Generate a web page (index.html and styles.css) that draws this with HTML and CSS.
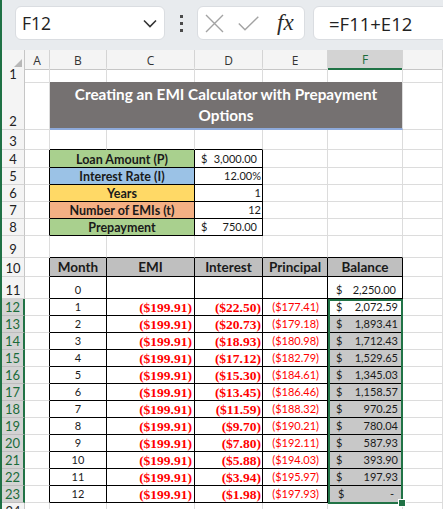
FILE: index.html
```html
<!DOCTYPE html>
<html>
<head>
<meta charset="utf-8">
<link rel="stylesheet" href="styles.css">
</head>
<body>
<div class="app">
  <div class="fbar">
    <div class="namebox"><span>F12</span><svg class="chev" width="14" height="9" viewBox="0 0 14 9"><polyline points="1,1.5 7,7.5 13,1.5" fill="none" stroke="#333" stroke-width="1.6"/></svg></div>
    <div class="dots"><i></i><i></i><i></i></div>
    <div class="fxbox">
      <svg class="xic" width="19" height="19" viewBox="0 0 19 19"><path d="M1 1L18 18M18 1L1 18" stroke="#a3a3a3" stroke-width="1.4" fill="none"/></svg>
      <svg class="ckic" width="21" height="15" viewBox="0 0 21 15"><polyline points="0.8,7.5 7,13.8 20.3,0.8" stroke="#a3a3a3" stroke-width="1.4" fill="none"/></svg>
      <span class="fx">fx</span>
    </div>
    <div class="formula">=F11+E12</div>
  </div>

  <div class="row h17">
    <div class="corner"><svg width="9" height="9" viewBox="0 0 9 9"><polygon points="9,0 9,9 0,9" fill="#b7b7b7"/></svg></div>
    <div class="ch">A</div><div class="ch">B</div><div class="ch">C</div><div class="ch">D</div><div class="ch">E</div><div class="ch sel">F</div><div class="ch"></div>
  </div>

  <div class="row h15"><div class="rh">1</div><div class="c"></div><div class="c"></div><div class="c"></div><div class="c"></div><div class="c"></div><div class="c"></div><div class="c"></div></div>

  <div class="row h48"><div class="rh">2</div><div class="c"></div><div class="c title">Creating an EMI Calculator with Prepayment<br>Options</div><div class="c"></div></div>

  <div class="row h20"><div class="rh">3</div><div class="c"></div><div class="c bb"></div><div class="c bb"></div><div class="c bb"></div><div class="c"></div><div class="c"></div><div class="c"></div></div>

  <div class="row h18"><div class="rh">4</div><div class="c br"></div><div class="c t lbl lg">Loan Amount (P)</div><div class="c t accd"><span>$</span><span>3,000.00</span></div><div class="c"></div><div class="c"></div><div class="c"></div></div>
  <div class="row h17"><div class="rh">5</div><div class="c br"></div><div class="c t lbl lb">Interest Rate (I)</div><div class="c t rtd">12.00%</div><div class="c"></div><div class="c"></div><div class="c"></div></div>
  <div class="row h17"><div class="rh">6</div><div class="c br"></div><div class="c t lbl ly">Years</div><div class="c t rtd">1</div><div class="c"></div><div class="c"></div><div class="c"></div></div>
  <div class="row h17"><div class="rh">7</div><div class="c br"></div><div class="c t lbl lo">Number of EMIs (t)</div><div class="c t rtd">12</div><div class="c"></div><div class="c"></div><div class="c"></div></div>
  <div class="row h17"><div class="rh">8</div><div class="c br"></div><div class="c t lbl lg">Prepayment</div><div class="c t accd"><span>$</span><span>750.00</span></div><div class="c"></div><div class="c"></div><div class="c"></div></div>

  <div class="row h22"><div class="rh">9</div><div class="c"></div><div class="c bb"></div><div class="c bb"></div><div class="c bb"></div><div class="c bb"></div><div class="c bb"></div><div class="c"></div></div>

  <div class="row h19"><div class="rh">10</div><div class="c br"></div><div class="c t hd">Month</div><div class="c t hd">EMI</div><div class="c t hd">Interest</div><div class="c t hd">Principal</div><div class="c t hd">Balance</div><div class="c"></div></div>

  <div class="row h22"><div class="rh">11</div><div class="c br"></div><div class="c t mo">0</div><div class="c t"></div><div class="c t"></div><div class="c t"></div><div class="c t bal b0"><span>$</span><span>2,250.00</span></div><div class="c"></div></div>

  <div class="row h17"><div class="rh sel">12</div><div class="c br"></div><div class="c t mo">1</div><div class="c t emi">($199.91)</div><div class="c t int">($22.50)</div><div class="c t pr">($177.41)</div><div class="c t bal act"><span>$</span><span>2,072.59</span><i class="selbox"><b class="handle"></b></i></div><div class="c"></div></div>
  <div class="row h17"><div class="rh sel">13</div><div class="c br"></div><div class="c t mo">2</div><div class="c t emi">($199.91)</div><div class="c t int">($20.73)</div><div class="c t pr">($179.18)</div><div class="c t bal sg"><span>$</span><span>1,893.41</span></div><div class="c"></div></div>
  <div class="row h17"><div class="rh sel">14</div><div class="c br"></div><div class="c t mo">3</div><div class="c t emi">($199.91)</div><div class="c t int">($18.93)</div><div class="c t pr">($180.98)</div><div class="c t bal sg"><span>$</span><span>1,712.43</span></div><div class="c"></div></div>
  <div class="row h17"><div class="rh sel">15</div><div class="c br"></div><div class="c t mo">4</div><div class="c t emi">($199.91)</div><div class="c t int">($17.12)</div><div class="c t pr">($182.79)</div><div class="c t bal sg"><span>$</span><span>1,529.65</span></div><div class="c"></div></div>
  <div class="row h17"><div class="rh sel">16</div><div class="c br"></div><div class="c t mo">5</div><div class="c t emi">($199.91)</div><div class="c t int">($15.30)</div><div class="c t pr">($184.61)</div><div class="c t bal sg"><span>$</span><span>1,345.03</span></div><div class="c"></div></div>
  <div class="row h17"><div class="rh sel">17</div><div class="c br"></div><div class="c t mo">6</div><div class="c t emi">($199.91)</div><div class="c t int">($13.45)</div><div class="c t pr">($186.46)</div><div class="c t bal sg"><span>$</span><span>1,158.57</span></div><div class="c"></div></div>
  <div class="row h17"><div class="rh sel">18</div><div class="c br"></div><div class="c t mo">7</div><div class="c t emi">($199.91)</div><div class="c t int">($11.59)</div><div class="c t pr">($188.32)</div><div class="c t bal sg"><span>$</span><span>970.25</span></div><div class="c"></div></div>
  <div class="row h17"><div class="rh sel">19</div><div class="c br"></div><div class="c t mo">8</div><div class="c t emi">($199.91)</div><div class="c t int">($9.70)</div><div class="c t pr">($190.21)</div><div class="c t bal sg"><span>$</span><span>780.04</span></div><div class="c"></div></div>
  <div class="row h17"><div class="rh sel">20</div><div class="c br"></div><div class="c t mo">9</div><div class="c t emi">($199.91)</div><div class="c t int">($7.80)</div><div class="c t pr">($192.11)</div><div class="c t bal sg"><span>$</span><span>587.93</span></div><div class="c"></div></div>
  <div class="row h17"><div class="rh sel">21</div><div class="c br"></div><div class="c t mo">10</div><div class="c t emi">($199.91)</div><div class="c t int">($5.88)</div><div class="c t pr">($194.03)</div><div class="c t bal sg"><span>$</span><span>393.90</span></div><div class="c"></div></div>
  <div class="row h17"><div class="rh sel">22</div><div class="c br"></div><div class="c t mo">11</div><div class="c t emi">($199.91)</div><div class="c t int">($3.94)</div><div class="c t pr">($195.97)</div><div class="c t bal sg"><span>$</span><span>197.93</span></div><div class="c"></div></div>
  <div class="row h17"><div class="rh sel">23</div><div class="c br"></div><div class="c t mo">12</div><div class="c t emi">($199.91)</div><div class="c t int">($1.98)</div><div class="c t pr">($197.93)</div><div class="c t bal sg zero"><span>$</span><span>-</span></div><div class="c"></div></div>

  <div class="row h17"><div class="rh">24</div><div class="c"></div><div class="c"></div><div class="c"></div><div class="c"></div><div class="c"></div><div class="c"></div><div class="c"></div></div>
</div>
</body>
</html>
```

FILE: styles.css
```css
* { box-sizing: border-box; }
html, body { margin: 0; padding: 0; }
body {
  width: 443px;
  height: 509px;
  overflow: hidden;
  background: #fff;
  font-family: Lato, "Liberation Sans", sans-serif;
  color: #1a1a1a;
}
.app {
  border-left: 2px solid #1f7145;
  height: 509px;
  overflow: hidden;
}

/* formula bar */
.fbar {
  height: 50px;
  background: #e8ebee;
  display: flex;
  align-items: flex-start;
  padding: 6px 0 0 13px;
}
.namebox {
  width: 150px;
  height: 34px;
  background: #fff;
  border: 1px solid #dadde1;
  border-radius: 6px;
  display: flex;
  align-items: center;
  justify-content: space-between;
  padding: 0 7px 0 6px;
  font-family: "Open Sans", sans-serif;
  font-size: 17.5px;
  color: #222;
}
.chev { margin-top: 1px; }
.dots {
  width: 10px;
  margin-left: 11px;
  height: 34px;
  display: flex;
  flex-direction: column;
  align-items: center;
  justify-content: center;
  gap: 4px;
}
.dots i {
  display: block;
  width: 3px;
  height: 3px;
  background: #4a4a4a;
}
.fxbox {
  margin-left: 11px;
  width: 108px;
  height: 34px;
  background: #fff;
  border: 1px solid #dadde1;
  border-radius: 6px;
  display: flex;
  align-items: center;
  padding-left: 7px;
}
.ckic { margin-left: 14px; }
.fx {
  margin-left: 18px;
  font-family: "Liberation Serif", serif;
  font-style: italic;
  font-size: 23px;
  color: #2a2a2a;
  line-height: 1;
  margin-top: -2px;
}
.formula {
  margin-left: 8px;
  flex: 1;
  margin-right: -12px;
  height: 34px;
  background: #fff;
  border: 1px solid #dadde1;
  border-radius: 6px;
  display: flex;
  align-items: center;
  padding-left: 15px;
  font-family: "Open Sans", sans-serif;
  font-size: 18.5px;
  color: #222;
}

/* grid rows */
.row {
  display: grid;
  grid-template-columns: 23px 25px 57px 88px 68px 65px 75px 40px;
}
.h15 { height: 15px; }
.h17 { height: 17px; }
.h18 { height: 18px; }
.h19 { height: 19px; }
.h20 { height: 20px; }
.h22 { height: 22px; }
.h48 { height: 48px; }

.corner {
  background: #f4f4f4;
  border-right: 1px solid #c6c6c6;
  border-bottom: 1px solid #c6c6c6;
  display: flex;
  align-items: flex-end;
  justify-content: flex-end;
  padding: 0 2px 1px 0;
}
.ch {
  background: #f4f4f4;
  border-right: 1px solid #d4d4d4;
  border-bottom: 1px solid #c6c6c6;
  display: flex;
  align-items: center;
  justify-content: center;
  font-family: "Open Sans", sans-serif;
  font-size: 12px;
  color: #333;
  padding-top: 1px;
}
.ch.sel {
  background: #d3d3d3;
  color: #1b6b3a;
  border-bottom: 2px solid #217346;
}
.rh {
  background: #f4f4f4;
  border-right: 1px solid #c6c6c6;
  border-bottom: 1px solid #d4d4d4;
  display: flex;
  align-items: flex-end;
  justify-content: center;
  font-family: "Liberation Sans Narrow", Lato, sans-serif;
  font-size: 13px;
  line-height: 15px;
  color: #222;
}
.rh.sel {
  background: #d3d3d3;
  color: #1b6b3a;
  border-right: 2px solid #217346;
  border-bottom-color: #bdbdbd;
}

.c {
  border-right: 1px solid #dcdcdc;
  border-bottom: 1px solid #dcdcdc;
  display: flex;
  align-items: flex-end;
  padding: 0 3px 1px;
  white-space: nowrap;
  overflow: hidden;
  font-size: 11px;
  line-height: 14px;
  color: #1a1a1a;
}
.t { border-right-color: #000; border-bottom-color: #000; }
.bb { border-bottom-color: #000; }
.br { border-right-color: #000; }

.title {
  grid-column: span 5;
  background: #757171;
  border-bottom: 2px solid #8eaadb;
  border-right-color: #dcdcdc;
  color: #fff;
  font-weight: 700;
  font-size: 15.3px;
  line-height: 21px;
  text-align: center;
  align-items: center;
  justify-content: center;
  padding: 0 0 1px;
}

.lbl {
  grid-column: span 2;
  justify-content: center;
  font-weight: 700;
  font-size: 12.5px;
  line-height: 15px;
  padding-bottom: 0;
}
.lg { background: #a9d08e; }
.lb { background: #9bc2e6; }
.ly { background: #ffd966; }
.lo { background: #f4b084; }

.accd { justify-content: space-between; padding: 0 5px 1px 6px; }
.rtd { justify-content: flex-end; padding-right: 1px; }

.hd {
  background: #bfbfbf;
  justify-content: center;
  font-weight: 700;
  font-size: 13.5px;
  line-height: 16px;
  padding-bottom: 1px;
}
.mo { justify-content: center; }
.emi, .int {
  justify-content: flex-end;
  color: #ff0000;
  font-family: "Liberation Serif", serif;
  font-weight: 700;
  font-size: 13.5px;
  line-height: 15px;
  padding-bottom: 0;
}
.emi { padding-right: 2px; }
.int { padding-right: 1px; }
.pr {
  justify-content: flex-end;
  color: #ff0000;
  padding-right: 8px;
}
.bal { justify-content: space-between; padding: 0 4px 1px 8px; }
.b0 { padding-right: 6px; }
.sg { background: #c8c8c8; }
.zero { padding: 0 8px 1px 10px; }

.act { position: relative; overflow: visible; }
.selbox {
  position: absolute;
  left: 0;
  top: 0;
  width: 75px;
  height: 205px;
  border: 2px solid #217346;
  z-index: 5;
}
.handle {
  position: absolute;
  right: -5px;
  bottom: -5px;
  width: 8px;
  height: 8px;
  background: #217346;
  border: 1px solid #fff;
}
```
